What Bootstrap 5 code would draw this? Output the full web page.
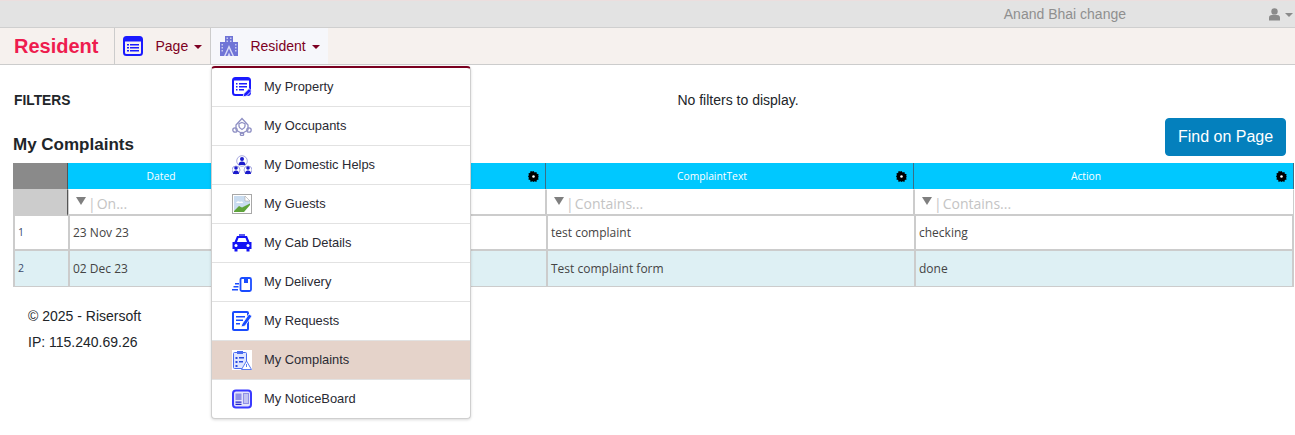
<!DOCTYPE html>
<html lang="en">
<head>
<meta charset="utf-8">
<title>My Complaints</title>
<link rel="stylesheet" href="https://cdn.jsdelivr.net/npm/bootstrap@5.3.0/dist/css/bootstrap.min.css">
<style>
body{font-family:"Liberation Sans",Arial,sans-serif;font-size:14px;color:#212529;background:#fff;overflow:hidden}
.topstrip{height:28px;background:#e3e3e3;border-top:1px solid #ecdede;border-bottom:1px solid #cfcfcf;color:#8f8f8f;font-size:14px;padding-right:2px}
.topstrip .who{margin-right:142px}
.mainbar{height:37px;background:#f6f1ee;border-bottom:1px solid #cccccc;padding:0;position:relative}
.brandname{font-weight:700;font-size:20px;color:#ee1c4e;padding:0 16px 0 14px;line-height:36px;margin:0;border-right:1px solid #cccccc}
.navitem{display:flex;align-items:center;height:36px;color:#7d0022;text-decoration:none;font-size:14px}
.navitem:hover{color:#7d0022}
.navpage{width:96px;border-right:1px solid #cccccc;padding-left:8px}
.navres{width:117px;padding-left:8px;background:#f6f7fb}
.navitem .lbl{margin-left:12px}
.navres .lbl{margin-left:11px}
.caretdown{display:inline-block;width:0;height:0;border-left:4px solid transparent;border-right:4px solid transparent;border-top:4px solid currentColor;margin-left:6px;margin-top:1px}
.ddmenu{display:block;position:absolute;left:211px;top:66px;width:260px;padding:0;margin:0;border:1px solid #cfcfcf;border-top:2px solid #7a0020;border-radius:4px;box-shadow:0 1px 3px rgba(0,0,0,.15);background:#fff;z-index:20}
.ddmenu .dropdown-item{display:flex;align-items:center;height:39px;padding:0 0 0 20px;font-size:12.9px;color:#2a2a33;border-bottom:1px solid #e2e2e2}
.ddmenu li:last-child .dropdown-item{border-bottom:0;height:38px}
.ddmenu .dropdown-item.current{background:#e5d3ca}
.ddmenu .ic{width:20px;height:20px;margin-right:12px;flex:none}
.pagebody{padding:0 9px 0 13px}
.filterrow{height:72px;position:relative}
.filterlbl{font-size:13.8px;font-weight:700;color:#212529;margin:0 0 0 1px;width:120px;padding-top:26px}
.filtermsg{flex:1;text-align:center;padding-top:27px;padding-left:56px;font-size:14px;line-height:16px}
.headrow{height:53px;margin-top:-25px}
.pagetitle{font-size:17px;font-weight:700;margin:0;padding-top:23px;line-height:20px;color:#212529}
.findbtn{background:#0480bd;border:1px solid #0480bd;color:#fff;font-size:16px;padding:0;width:121px;height:38px;border-radius:4px;margin-bottom:9px}
.grid{table-layout:fixed;width:1281px;border-collapse:separate;border-spacing:0;font-family:"Open Sans",sans-serif;font-size:12px;margin:-2px 0 0}
.grid th{background:#00c8ff;color:#fff;font-weight:400;font-size:10.3px;text-align:center;height:26px;padding:2px 35px 0 0;position:relative;border-right:1px solid #3a6f86}
.grid th:first-child{background:#8a8a8a;border-right:1px solid #555;padding:0}
.grid th.plainhead{padding:2px 0 0 2px}
.gear{position:absolute;right:6px;top:8px;width:11px;height:11px}
.grid .fr td{height:26px;padding:4px 0 0 7px;background:#fff;border-top:1px solid #fff;border-bottom:2px solid #cccccc;border-right:1px solid #cccccc;border-left:1px solid #cccccc;color:#c4c4c4;font-size:14px;line-height:20px;white-space:nowrap}
.grid .fr td:first-child{background:#cccccc;border-color:#cccccc;border-right:1px solid #555}
.fun{display:inline-block;width:0;height:0;border-left:5px solid transparent;border-right:5px solid transparent;border-top:8px solid #7f7f7f;vertical-align:4px;margin-right:2px}
.sep{color:#c4c4c4;margin-right:1px}
.grid .dr td{height:35px;padding:0 0 0 3px;color:#444;border-left:2px solid #cccccc;border-bottom:2px solid #cccccc;white-space:nowrap}
.grid .dr.alt td{height:36px;background:#def0f4;border-bottom:1px solid #cccccc}
.grid .dr td:first-child{border-left:2px solid #cccccc;font-size:10.5px;padding-left:3px;color:#3b4a6b}
.grid .dr td:last-child{border-right:2px solid #cccccc}
.footbox{padding:16px 0 0 15px;font-size:14px;line-height:26px;color:#212529}
</style>
</head>
<body>
<div class="topstrip d-flex justify-content-end align-items-center">
  <span class="who">Anand Bhai change</span>
  <svg width="13" height="13" viewBox="0 0 13 13" class="me-1"><circle cx="6.500" cy="3.400" r="3.200" fill="#8a8a8a"/><path d="M1 12.500V9.500C1 7.500 3 6.800 6.500 6.800S12 7.500 12 9.500V12.500Z" fill="#8a8a8a"/></svg>
  <span class="caretdown" style="margin-left:0;color:#8a8a8a"></span>
</div>
<nav class="mainbar d-flex">
  <div class="brandname">Resident</div>
  <a class="navitem navpage" href="#">
    <svg width="20" height="20" viewBox="0 0 20 20"><rect x="1" y="1" width="18" height="18" rx="2.500" fill="none" stroke="#1a1aff" stroke-width="2"/><rect x="1" y="1" width="18" height="4.500" fill="#1a1aff"/><path d="M4 8h2v1.500H4zM7 8h9v1.500H7zM4 11h2v1.500H4zM7 11h9v1.500H7zM4 14h2v1.500H4zM7 14h9v1.500H7z" fill="#1a1aff"/></svg>
    <span class="lbl">Page</span><span class="caretdown"></span>
  </a>
  <a class="navitem navres" href="#">
    <svg width="20" height="20" viewBox="0 0 20 20"><path d="M6 0h8v6h5v14H1V6h5z" fill="#6f74d6"/><path d="M7.500 1.500h1.500v1.500H7.500zM11 1.500h1.500v1.500H11zM7.500 4.500h1.500v1.500H7.500zM11 4.500h1.500v1.500H11zM2.500 8h1.500v1.500H2.500zM2.500 11h1.500v1.500H2.500zM2.500 14h1.500v1.500H2.500zM16 8h1.500v1.500H16zM16 11h1.500v1.500H16zM16 14h1.500v1.500H16z" fill="#c8caf2"/><path d="M5 20l5-11 5 11h-1.500l-3.500-7.500L6.500 20zM8.500 20l1.500-3.500 1.500 3.500z" fill="#d8daf7"/></svg>
    <span class="lbl">Resident</span><span class="caretdown"></span>
  </a>
</nav>
<ul class="ddmenu list-unstyled">
  <li><a class="dropdown-item" href="#"><svg class="ic" viewBox="0 0 20 20"><rect x="1" y="1" width="17" height="17" rx="2.500" fill="none" stroke="#1a1aff" stroke-width="2"/><rect x="1" y="1" width="17" height="2.500" fill="#1a1aff"/><path d="M4 6h1.500v1.500H4zM7 6h8v1.500H7zM4 9h1.500v1.500H4zM7 9h8v1.500H7zM4 12h1.500v1.500H4zM7 12h5v1.500H7z" fill="#1a1aff"/><path d="M11 20l1-3.500 5-5 2.500 2.500-5 5z" fill="#1a1aff" stroke="#fff" stroke-width=".8"/></svg>My Property</a></li>
  <li><a class="dropdown-item" href="#"><svg class="ic" viewBox="0 0 20 20" fill="none" stroke="#8f90c4" stroke-width="1.300"><path d="M4 9l6-6.500L16 9v5l-6 3.500L4 14z"/><path d="M10 6.500l3 1.200v2.500c0 1.500-1.500 2.500-3 3.300-1.500-.8-3-1.800-3-3.300V7.700z"/><circle cx="3" cy="14" r="2.200"/><circle cx="17" cy="14" r="2.200"/><circle cx="10" cy="18" r="1.700"/></svg>My Occupants</a></li>
  <li><a class="dropdown-item" href="#"><svg class="ic" viewBox="0 0 20 20"><g fill="none" stroke="#a9aae0" stroke-width="1"><circle cx="10" cy="6" r="5.300"/><circle cx="4" cy="15" r="4"/><circle cx="16" cy="15" r="4"/></g><g fill="#1a1acc"><circle cx="10" cy="4" r="2"/><path d="M6.500 10c0-2.500 1.500-3.500 3.500-3.500s3.500 1 3.500 3.500z"/><circle cx="4" cy="13" r="1.800"/><path d="M1 19c0-2.500 1.200-3.500 3-3.500s3 1 3 3.500z"/><circle cx="16" cy="13" r="1.800"/><path d="M13 19c0-2.500 1.200-3.500 3-3.500s3 1 3 3.500z"/></g></svg>My Domestic Helps</a></li>
  <li><a class="dropdown-item" href="#"><svg class="ic" viewBox="0 0 20 20"><rect x=".5" y=".5" width="19" height="19" fill="#fff" stroke="#a8a8a8"/><path d="M2 2h11l5 5v3.500L2 17z" fill="#c9dcf0"/><path d="M4 9c1-2 3-2 4-1 2-1 3 0 3 1z" fill="#fff"/><path d="M2 17l5-5 3 1.500 8-4V18H2z" fill="#5ea33b"/><path d="M13 2l5 5h-5z" fill="#fff" stroke="#aaa" stroke-width=".6"/><path d="M12 18l6-7v7z" fill="#fff"/></svg>My Guests</a></li>
  <li><a class="dropdown-item" href="#"><svg class="ic" viewBox="0 0 20 20"><path d="M7 1h6v2H7z" fill="#5a5af0"/><path d="M5 3h10l2.500 6H19.500v7h-2v2.500h-3V16h-9v2.500h-3V16h-2V9h2z" fill="#1212f5"/><path d="M6.500 5h7l1.500 4H5z" fill="#fff"/><circle cx="4" cy="12.500" r="1.500" fill="#fff"/><circle cx="16" cy="12.500" r="1.500" fill="#fff"/></svg>My Cab Details</a></li>
  <li><a class="dropdown-item" href="#"><svg class="ic" viewBox="0 0 20 20"><rect x="8.500" y="6" width="10.500" height="13" rx="1.500" fill="none" stroke="#1a4cff" stroke-width="1.800"/><path d="M12 6h4v5h-4z" fill="#1a4cff"/><path d="M3 11h4v1.500H3zM1.500 14h5v1.500h-5zM0 17h6v1.500H0z" fill="#1a4cff"/></svg>My Delivery</a></li>
  <li><a class="dropdown-item" href="#"><svg class="ic" viewBox="0 0 20 20"><rect x="1" y="1" width="15" height="18" rx="1" fill="none" stroke="#1a4cff" stroke-width="2"/><path d="M4 5h9v1.500H4zM4 8.500h7V10H4zM4 12h4v1.500H4z" fill="#1a4cff"/><path d="M9 16l1-3 7-10 3 2-7 10z" fill="#1a4cff" stroke="#fff" stroke-width=".8"/></svg>My Requests</a></li>
  <li><a class="dropdown-item current" href="#"><svg class="ic" viewBox="0 0 20 20"><rect width="20" height="20" fill="#fff"/><rect x="1.500" y="2.500" width="13" height="16" rx="1" fill="#dfe6ff" stroke="#4a6cf0"/><rect x="5" y="1" width="6" height="3" fill="#4a6cf0"/><path d="M3.500 7h2v2h-2zM7 7h5v1.500H7zM3.500 11h2v2h-2zM7 11h4v1.500H7zM3.500 15h2v2h-2z" fill="#2a4ce0"/><path d="M14.500 11l5 8.500h-10z" fill="#fff" stroke="#5a7cf0"/><path d="M14 14h1v3h-1z" fill="#5a7cf0"/></svg>My Complaints</a></li>
  <li><a class="dropdown-item" href="#"><svg class="ic" viewBox="0 0 20 20"><rect x="1" y="1.500" width="18" height="17" rx="3" fill="#e3e3fb" stroke="#3a3aff" stroke-width="2"/><rect x="3.500" y="4.500" width="6" height="6.500" fill="#8f90e6"/><rect x="11.500" y="4.500" width="5" height="10" fill="#c2c3f2" stroke="#8f90e6"/><path d="M3.500 12.500h6v1.200h-6zM3.500 14.800h6V16h-6z" fill="#2323c8"/></svg>My NoticeBoard</a></li>
</ul>
<main class="pagebody">
  <div class="filterrow d-flex">
    <p class="filterlbl">FILTERS</p>
    <div class="filtermsg">No filters to display.</div>
  </div>
  <div class="headrow d-flex justify-content-between align-items-end">
    <h1 class="pagetitle align-self-start">My Complaints</h1>
    <button type="button" class="btn findbtn">Find on Page</button>
  </div>
  <table class="grid">
    <colgroup><col style="width:55px"><col style="width:185px"><col style="width:293px"><col style="width:368px"><col style="width:380px"></colgroup>
    <thead>
      <tr>
        <th></th>
        <th class="plainhead">Dated</th>
        <th><svg class="gear" viewBox="0 0 12 12"><path d="M6 0l1.200 1.600 2-.6.400 2 2 .6-.6 2L12 6l-1 1.400.6 2-2 .5-.4 2-2-.6L6 12l-1.200-.7-2 .6-.4-2-2-.5.6-2L0 6l1-1.600-.6-1.800 2-.6.400-2 2 .6z"/><circle cx="6" cy="6" r="1.400" fill="#fff"/></svg></th>
        <th>ComplaintText<svg class="gear" viewBox="0 0 12 12"><path d="M6 0l1.200 1.600 2-.6.400 2 2 .6-.6 2L12 6l-1 1.400.6 2-2 .5-.4 2-2-.6L6 12l-1.200-.7-2 .6-.4-2-2-.5.6-2L0 6l1-1.600-.6-1.800 2-.6.400-2 2 .6z"/><circle cx="6" cy="6" r="1.400" fill="#fff"/></svg></th>
        <th>Action<svg class="gear" viewBox="0 0 12 12"><path d="M6 0l1.200 1.600 2-.6.400 2 2 .6-.6 2L12 6l-1 1.400.6 2-2 .5-.4 2-2-.6L6 12l-1.200-.7-2 .6-.4-2-2-.5.6-2L0 6l1-1.600-.6-1.800 2-.6.400-2 2 .6z"/><circle cx="6" cy="6" r="1.400" fill="#fff"/></svg></th>
      </tr>
    </thead>
    <tbody>
      <tr class="fr"><td></td><td><span class="fun"></span><span class="sep">|</span>On...</td><td></td><td><span class="fun"></span><span class="sep">|</span>Contains...</td><td><span class="fun"></span><span class="sep">|</span>Contains...</td></tr>
      <tr class="dr"><td>1</td><td>23 Nov 23</td><td></td><td>test complaint</td><td>checking</td></tr>
      <tr class="dr alt"><td>2</td><td>02 Dec 23</td><td></td><td>Test complaint form</td><td>done</td></tr>
    </tbody>
  </table>
  <footer class="footbox">© 2025 - Risersoft<br>IP: 115.240.69.26</footer>
</main>
<script src="https://cdn.jsdelivr.net/npm/bootstrap@5.3.0/dist/js/bootstrap.bundle.min.js"></script>
</body>
</html>
